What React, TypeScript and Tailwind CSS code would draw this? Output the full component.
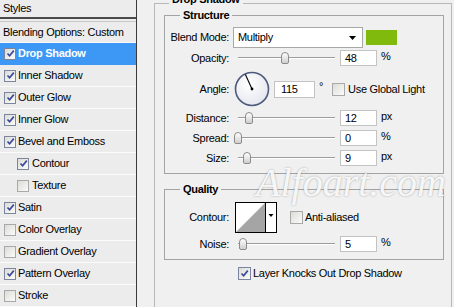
import type { ReactNode } from 'react';

const styleItems = [
  { label: 'Drop Shadow', checked: true, active: true },
  { label: 'Inner Shadow', checked: true },
  { label: 'Outer Glow', checked: true },
  { label: 'Inner Glow', checked: true },
  { label: 'Bevel and Emboss', checked: true },
  { label: 'Contour', checked: true, indent: true },
  { label: 'Texture', checked: false, indent: true },
  { label: 'Satin', checked: true },
  { label: 'Color Overlay', checked: false },
  { label: 'Gradient Overlay', checked: false },
  { label: 'Pattern Overlay', checked: true },
  { label: 'Stroke', checked: false },
];

function CheckBox({ checked, big }: { checked: boolean; big?: boolean }) {
  return (
    <span
      className={`flex shrink-0 items-center justify-center border bg-gradient-to-br from-[#dcdcd6] to-[#fbfbfb] ${
        big ? 'h-[13px] w-[13px]' : 'h-[12px] w-[12px]'
      } ${checked ? 'border-[#7b85a0]' : 'border-[#a9a9a9]'}`}
    >
      {checked && (
        <svg width="9" height="9" viewBox="0 0 9 9">
          <path d="M1.5 4.5 L3.6 6.8 L7.8 1.6" fill="none" stroke="#3a4a9c" strokeWidth="1.7" />
        </svg>
      )}
    </span>
  );
}

function Group({ title, className, children }: { title: string; className: string; children?: ReactNode }) {
  return (
    <div className={`relative border border-[#a3a3a3] ${className}`}>
      <span className="absolute -top-[8px] left-[15px] bg-[#f0f0f0] px-[3px] font-bold leading-[14px]">{title}</span>
      {children}
    </div>
  );
}

function Row({ label, className, children }: { label: string; className: string; children?: ReactNode }) {
  return (
    <div className={`flex items-center ${className}`}>
      <span className="w-[64px] text-right">{label}</span>
      {children}
    </div>
  );
}

function Slider({ thumb }: { thumb: number }) {
  return (
    <div className="relative ml-[5px] h-[16px] w-[106px]">
      <div className="absolute left-[4px] right-[5px] top-[7px] h-[2px] border-t border-b border-t-[#9c9c9c] border-b-white" />
      <div
        className="absolute top-[2px] h-[12px] w-[8px] rounded-t-[4px] rounded-b-[2px] border border-[#8c8c8c] bg-gradient-to-b from-white to-[#cfcfcf]"
        style={{ left: thumb }}
      />
    </div>
  );
}

function NumBox({ value, unit }: { value: string; unit: string }) {
  return (
    <>
      <span className="flex h-[16px] w-[37px] items-center border border-[#c3c3c3] bg-white pl-[4px]">{value}</span>
      <span className="ml-[4px] -mt-[3px]">{unit}</span>
    </>
  );
}

export default function App() {
  return (
    <div className="relative flex h-[307px] w-[454px] overflow-hidden bg-[#f0f0f0] font-['Liberation_Sans',Arial,sans-serif] text-[11px] leading-[13px] tracking-[-0.3px] text-black">
      {/* styles list */}
      <aside className="flex w-[137px] shrink-0 flex-col border-r border-[#3a3a3a] bg-[#ececec]">
        <div className="flex h-[17px] items-center pl-[3px]">Styles</div>
        <div className="h-[2px] bg-[#4a4a4a]" />
        <div className="h-[2px]" />
        <div className="flex h-[22px] items-center border-y border-t-[#c8c8c8] border-b-[#fafafa] pl-[3px]">
          Blending Options: Custom
        </div>
        {styleItems.map((item) => (
          <div
            key={item.label}
            className={`flex h-[22px] items-center border-b ${
              item.active ? 'border-[#3d98f5] bg-[#3d98f5] font-bold text-white' : 'border-[#fbfbfb]'
            } ${item.indent ? 'pl-[17px]' : 'pl-[4px]'}`}
          >
            <CheckBox checked={item.checked} />
            <span className={item.indent ? 'ml-[3px]' : 'ml-[2px]'}>{item.label}</span>
          </div>
        ))}
      </aside>

      {/* settings */}
      <main className="flex-1">
        <div className="relative ml-[17px] mt-[3px] h-[320px] w-[298px] border border-[#b8b8b8]">
          <span className="absolute -top-[12px] left-[14px] bg-[#f0f0f0] px-[3px] font-bold leading-[14px]">
            Drop Shadow
          </span>

          <Group title="Structure" className="ml-[9px] mt-[11px] h-[159px] w-[280px]">
            <Row label="Blend Mode:" className="mt-[11px] h-[21px]">
              <div className="relative ml-[4px] flex h-[21px] w-[130px] items-center border border-[#a8a8a8] bg-white pl-[4px]">
                Multiply
                <svg className="absolute right-[6px] top-[8px]" width="7" height="4" viewBox="0 0 7 4">
                  <path d="M0 0 H7 L3.5 4 Z" fill="#000" />
                </svg>
              </div>
              <span className="ml-[3px] h-[15px] w-[31px] bg-[#7fba0c]" />
            </Row>

            <Row label="Opacity:" className="mt-[2px] h-[16px]">
              <Slider thumb={47} />
              <NumBox value="48" unit="%" />
            </Row>

            <Row label="Angle:" className="mt-[5px] h-[36px]">
              <svg className="ml-[5px]" width="36" height="36" viewBox="0 0 36 36">
                <defs>
                  <radialGradient id="dial" cx="40%" cy="35%" r="70%">
                    <stop offset="0%" stopColor="#ffffff" />
                    <stop offset="100%" stopColor="#e4e6ee" />
                  </radialGradient>
                </defs>
                <circle cx="18" cy="18" r="16.5" fill="url(#dial)" stroke="#4d5a7c" strokeWidth="1.6" />
                <line x1="18" y1="18" x2="11.4" y2="3.6" stroke="#000" strokeWidth="1.1" />
                <circle cx="18" cy="18" r="1.4" fill="#000" />
              </svg>
              <span className="ml-[4px] flex h-[17px] w-[41px] items-center border border-[#c3c3c3] bg-white pl-[6px]">
                115
              </span>
              <span className="ml-[4px] -mt-[6px]">°</span>
              <span className="ml-[9px]">
                <CheckBox checked={false} big />
              </span>
              <span className="ml-[3px]">Use Global Light</span>
            </Row>

            <Row label="Distance:" className="mt-[3px] h-[16px]">
              <Slider thumb={11} />
              <NumBox value="12" unit="px" />
            </Row>
            <Row label="Spread:" className="mt-[4px] h-[16px]">
              <Slider thumb={0} />
              <NumBox value="0" unit="%" />
            </Row>
            <Row label="Size:" className="mt-[4px] h-[16px]">
              <Slider thumb={9} />
              <NumBox value="9" unit="px" />
            </Row>
          </Group>

          <Group title="Quality" className="ml-[9px] mt-[15px] h-[71px] w-[280px]">
            <Row label="Contour:" className="mt-[12px] h-[31px]">
              <svg className="ml-[6px]" width="42" height="31" viewBox="0 0 42 31">
                <rect x="0.5" y="0.5" width="41" height="30" fill="#fff" stroke="#000" />
                <polygon points="1,30 30,1 30,30" fill="#a5a5a5" />
                <line x1="30.5" y1="1" x2="30.5" y2="30" stroke="#000" />
                <path d="M33.5 12 H38.5 L36 15 Z" fill="#000" />
              </svg>
              <span className="ml-[13px]">
                <CheckBox checked={false} big />
              </span>
              <span className="ml-[2px]">Anti-aliased</span>
            </Row>
            <Row label="Noise:" className="mt-[3px] h-[16px]">
              <Slider thumb={5} />
              <NumBox value="5" unit="%" />
            </Row>
          </Group>

          <div className="ml-[83px] mt-[7px] flex h-[13px] items-center">
            <CheckBox checked big />
            <span className="ml-[2px]">Layer Knocks Out Drop Shadow</span>
          </div>
        </div>
      </main>

      {/* watermark */}
      <span className="pointer-events-none absolute left-[256px] top-[163px] font-['Liberation_Serif',serif] text-[40px] italic leading-none tracking-normal text-white/90 [text-shadow:0_0_2px_rgba(90,90,90,0.55)]">
        Alfoart.com
      </span>
    </div>
  );
}
